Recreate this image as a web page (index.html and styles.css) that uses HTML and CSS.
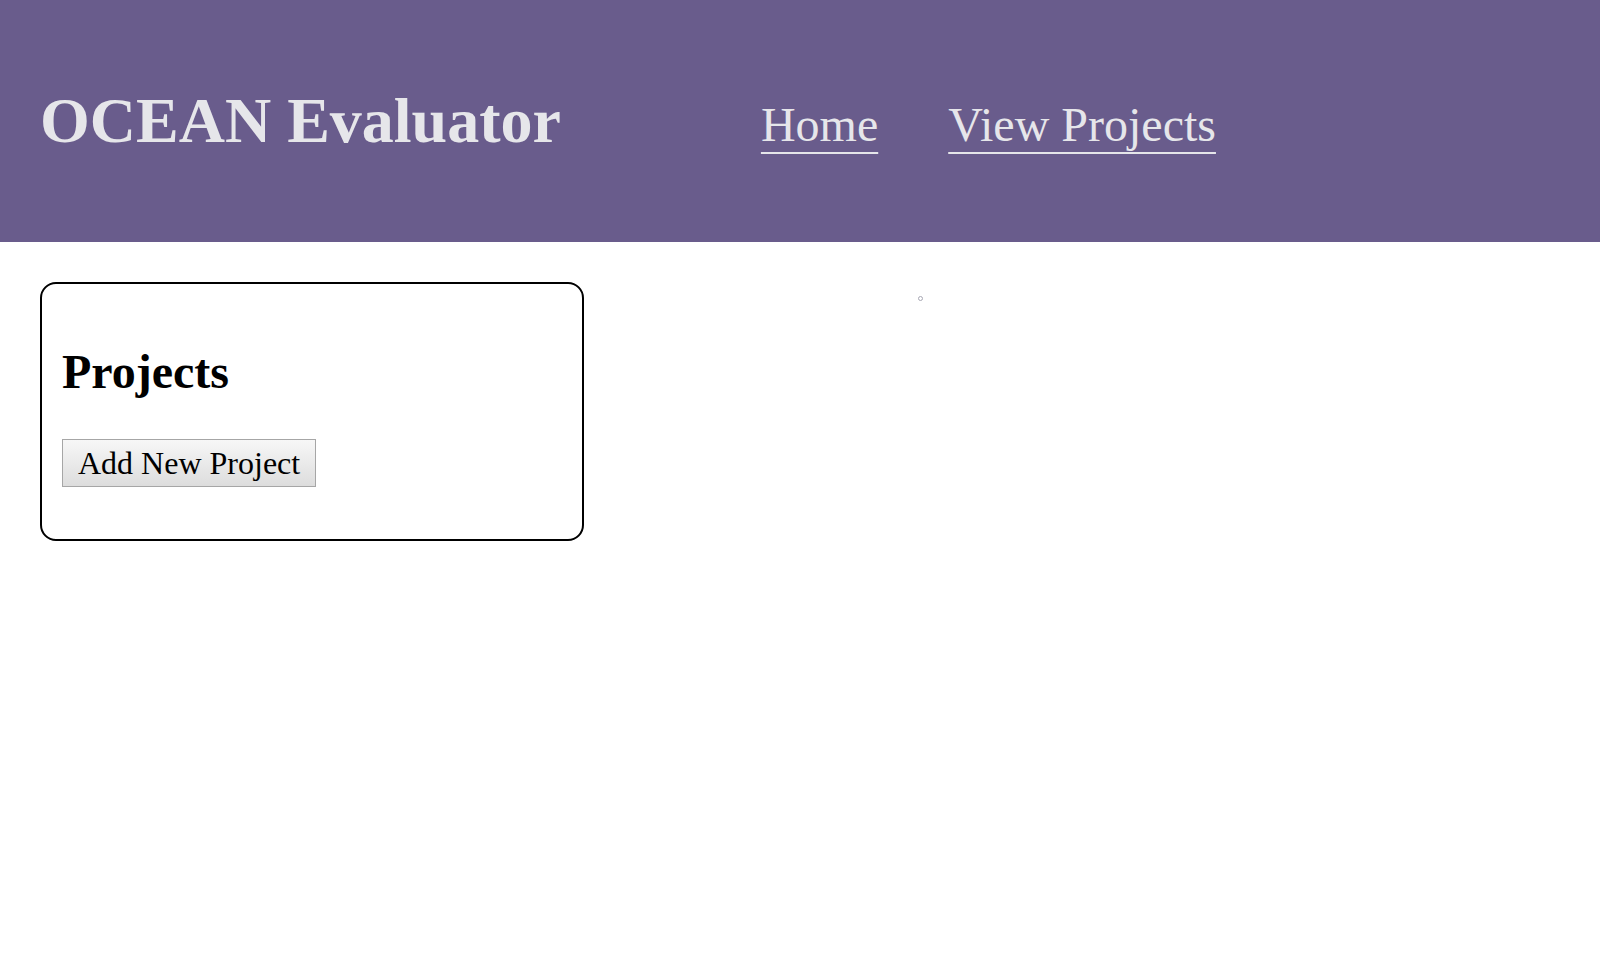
FILE: index.html
```html
<!DOCTYPE html>
<html lang="en">
<head>
<meta charset="utf-8">
<title>OCEAN Evaluator</title>
<link rel="stylesheet" href="styles.css">
</head>
<body>
<header class="site-header">
  <h1 class="brand">OCEAN Evaluator</h1>
  <nav class="main-nav">
    <a class="nav-link" href="#">Home</a>
    <a class="nav-link" href="#">View Projects</a>
  </nav>
</header>
<main class="content">
  <section class="card">
    <h2 class="card-title">Projects</h2>
    <div class="card-actions">
      <button class="btn" type="button">Add New Project</button>
    </div>
  </section>
  <div class="side">
    <span class="dot"></span>
  </div>
</main>
</body>
</html>
```

FILE: styles.css
```css
html, body {
  margin: 0;
  padding: 0;
  background: #ffffff;
}
body {
  font-family: "Liberation Serif", "Times New Roman", serif;
  font-size: 32px;
  color: #000;
}
.site-header {
  background: #695c8c;
  color: #e6e6ea;
  display: flex;
  align-items: center;
  padding: 40px 40px;
  height: 242px;
  box-sizing: border-box;
}
.brand {
  font-size: 64px;
  font-weight: bold;
  margin: 0;
  line-height: 1.15;
}
.main-nav {
  display: flex;
  gap: 70px;
  margin-left: 200px;
  padding-top: 6px;
}
.nav-link {
  color: #e6e6ea;
  font-size: 48px;
  text-decoration: underline;
  text-decoration-thickness: 2px;
  text-underline-offset: 11px;
  text-decoration-skip-ink: none;
}
.content {
  display: flex;
  align-items: flex-start;
  padding: 40px 40px;
}
.card {
  width: 500px;
  padding: 21px 20px 20px 20px;
  border: 2px solid #000;
  border-radius: 16px;
}
.card-title {
  font-size: 48px;
  font-weight: bold;
  margin: 39px 0 40px 0;
  line-height: 1.15;
}
.card-actions {
  margin-bottom: 32px;
}
.btn {
  font-family: "Liberation Serif", "Times New Roman", serif;
  font-size: 32px;
  color: #000;
  padding: 5px 15px 4px;
  border: 1px solid #a6a6a6;
  border-radius: 0;
  background: linear-gradient(#f7f7f7, #dddddd);
  line-height: 1.15;
}
.side {
  padding-left: 334px;
  padding-top: 14px;
}
.dot {
  display: block;
  width: 3px;
  height: 3px;
  border: 1px solid #a8a8b4;
  border-radius: 50%;
}
```
